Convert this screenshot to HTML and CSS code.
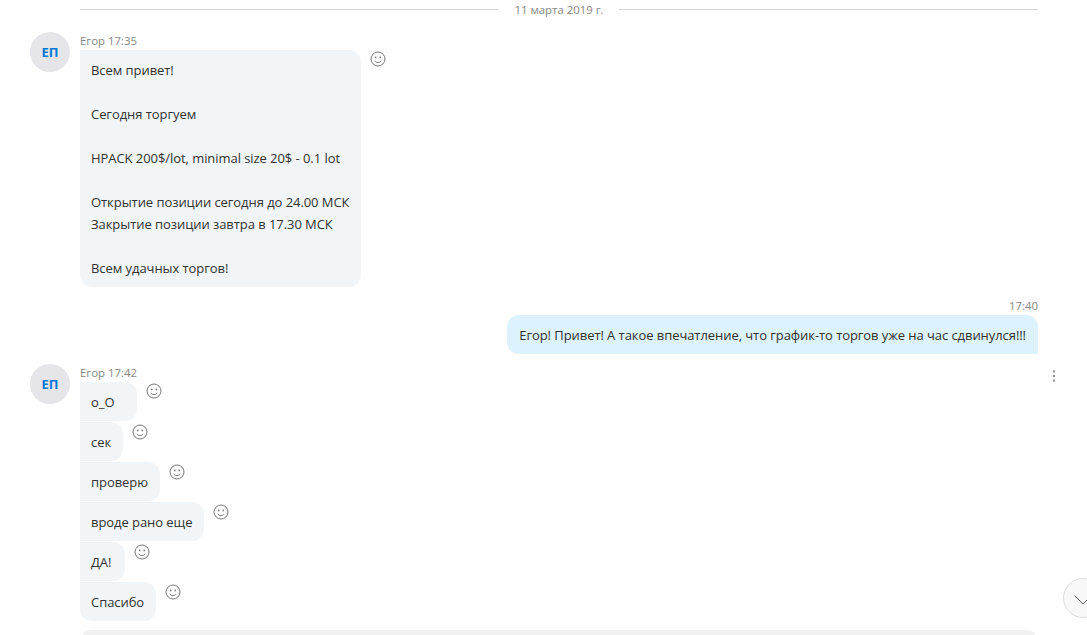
FILE: index.html
```html
<!DOCTYPE html>
<html lang="ru">
<head>
<meta charset="utf-8">
<title>Чат</title>
<link rel="stylesheet" href="styles.css">
</head>
<body>
<main class="chat">
  <div class="date-sep"><span class="date-line"></span><span class="date-text">11 марта 2019 г.</span><span class="date-line"></span></div>

  <section class="group">
    <div class="avatar">ЕП</div>
    <div class="stack">
      <div class="meta">Егор 17:35</div>
      <div class="row">
        <div class="bubble">Всем привет!<br><br>Сегодня торгуем<br><br>HPACK 200$/lot, minimal size 20$ - 0.1 lot<br><br>Открытие позиции сегодня до 24.00 МСК<br>Закрытие позиции завтра в 17.30 МСК<br><br>Всем удачных торгов!</div>
        <svg class="smile" viewBox="0 0 16 16"><circle cx="8" cy="8" r="7"/><circle class="eye" cx="5.700" cy="6.400" r=".9"/><circle class="eye" cx="10.300" cy="6.400" r=".9"/><path d="M4.800 9.800c.7 1.200 1.900 1.800 3.200 1.800s2.500-.6 3.200-1.800"/></svg>
      </div>
    </div>
  </section>

  <section class="own">
    <div class="own-time">17:40</div>
    <div class="bubble-own">Егор! Привет! А такое впечатление, что график-то торгов уже на час сдвинулся!!!</div>
  </section>

  <section class="group group-second">
    <div class="avatar">ЕП</div>
    <div class="stack">
      <div class="meta">Егор 17:42</div>
      <div class="row"><div class="bubble bubble-trailing">о_О</div><svg class="smile smile-high" viewBox="0 0 16 16"><circle cx="8" cy="8" r="7"/><circle class="eye" cx="5.700" cy="6.400" r=".9"/><circle class="eye" cx="10.300" cy="6.400" r=".9"/><path d="M4.800 9.800c.7 1.200 1.900 1.800 3.200 1.800s2.500-.6 3.200-1.800"/></svg></div>
      <div class="row"><div class="bubble">сек</div><svg class="smile" viewBox="0 0 16 16"><circle cx="8" cy="8" r="7"/><circle class="eye" cx="5.700" cy="6.400" r=".9"/><circle class="eye" cx="10.300" cy="6.400" r=".9"/><path d="M4.800 9.800c.7 1.200 1.900 1.800 3.200 1.800s2.500-.6 3.200-1.800"/></svg></div>
      <div class="row"><div class="bubble">проверю</div><svg class="smile" viewBox="0 0 16 16"><circle cx="8" cy="8" r="7"/><circle class="eye" cx="5.700" cy="6.400" r=".9"/><circle class="eye" cx="10.300" cy="6.400" r=".9"/><path d="M4.800 9.800c.7 1.200 1.900 1.800 3.200 1.800s2.500-.6 3.200-1.800"/></svg></div>
      <div class="row"><div class="bubble">вроде рано еще</div><svg class="smile" viewBox="0 0 16 16"><circle cx="8" cy="8" r="7"/><circle class="eye" cx="5.700" cy="6.400" r=".9"/><circle class="eye" cx="10.300" cy="6.400" r=".9"/><path d="M4.800 9.800c.7 1.200 1.900 1.800 3.200 1.800s2.500-.6 3.200-1.800"/></svg></div>
      <div class="row"><div class="bubble bubble-caps">ДА!</div><svg class="smile" viewBox="0 0 16 16"><circle cx="8" cy="8" r="7"/><circle class="eye" cx="5.700" cy="6.400" r=".9"/><circle class="eye" cx="10.300" cy="6.400" r=".9"/><path d="M4.800 9.800c.7 1.200 1.900 1.800 3.200 1.800s2.500-.6 3.200-1.800"/></svg></div>
      <div class="row"><div class="bubble">Спасибо</div><svg class="smile" viewBox="0 0 16 16"><circle cx="8" cy="8" r="7"/><circle class="eye" cx="5.700" cy="6.400" r=".9"/><circle class="eye" cx="10.300" cy="6.400" r=".9"/><path d="M4.800 9.800c.7 1.200 1.900 1.800 3.200 1.800s2.500-.6 3.200-1.800"/></svg></div>
    </div>
    <svg class="kebab" viewBox="0 0 4 12"><rect x="1" y=".5" width="2" height="2"/><rect x="1" y="5" width="2" height="2"/><rect x="1" y="9.500" width="2" height="2"/></svg>
  </section>

  <div class="composer"></div>
  <button class="scroll-btn" aria-label="Вниз"><svg viewBox="0 0 18 10"><path d="M.5 .5l8.500 8.500 8.500-8.500"/></svg></button>
</main>
</body>
</html>
```
FILE: styles.css
```css
* { box-sizing: border-box; }
html, body { margin: 0; height: 100%; overflow: hidden; background: #fff; }
body { font-family: "Open Sans", "Noto Sans", sans-serif; color: #333; font-size: 13px; }
.chat { position: relative; height: 635px; overflow: hidden; padding: 0 49px 0 30px; }

.date-sep { display: flex; align-items: center; height: 18px; margin-left: 50px; color: #888; font-size: 11.4px; gap: 15px; }
.date-line { flex: 1; height: 1px; background: #d5d5d5; }
.date-text { white-space: nowrap; }

.group { position: relative; display: flex; gap: 10px; margin-top: 14px; }
.group-second { margin-top: 10px; }
.avatar { width: 40px; height: 40px; border-radius: 50%; background: #e6e6ea; color: #0078d4; font-weight: 700; font-size: 13px; display: flex; align-items: center; justify-content: center; flex: none; }
.stack { display: flex; flex-direction: column; gap: 1px; align-items: flex-start; }
.meta { height: 17px; line-height: 18px; font-size: 11.4px; color: #888; }
.row { display: flex; align-items: flex-start; }
.bubble { background: #f2f5f8; border-radius: 0 12px 12px 0; padding: 9px 12px 8px 11px; line-height: 22px; white-space: nowrap; letter-spacing: -0.06px; }
.row:last-child .bubble { border-bottom-left-radius: 12px; }
.bubble-trailing { padding-right: 23px; }
.bubble-caps { padding-right: 14px; }
.smile { width: 16px; height: 16px; margin: 1px 0 0 9px; fill: none; stroke: #777; stroke-width: 1; flex: none; }
.group-second .smile { margin-top: 2px; }
.group-second .smile-high { margin-top: 1px; }
.smile .eye { fill: #777; stroke: none; }

.own { display: flex; flex-direction: column; align-items: flex-end; margin-top: 10px; }
.own-time { font-size: 11.4px; color: #888; height: 18px; line-height: 18px; }
.bubble-own { background: #dcf2fc; border-radius: 12px 12px 0 12px; padding: 9px 12px 8px; line-height: 22px; white-space: nowrap; letter-spacing: -0.064px; }

.kebab { position: absolute; right: -18px; top: 6px; width: 4px; height: 12px; fill: #909090; }

.composer { position: absolute; left: 80px; right: 49px; top: 630px; height: 20px; background: #f1f1f1; border-radius: 12px 12px 0 0; }
.scroll-btn { position: absolute; left: 1063px; top: 578px; width: 40px; height: 40px; padding: 0; border-radius: 50%; border: 1px solid #dedede; background: #f8f8f8; display: flex; align-items: center; justify-content: center; }
.scroll-btn svg { width: 18px; height: 10px; margin-top: 3px; fill: none; stroke: #555; stroke-width: 1; }
```
